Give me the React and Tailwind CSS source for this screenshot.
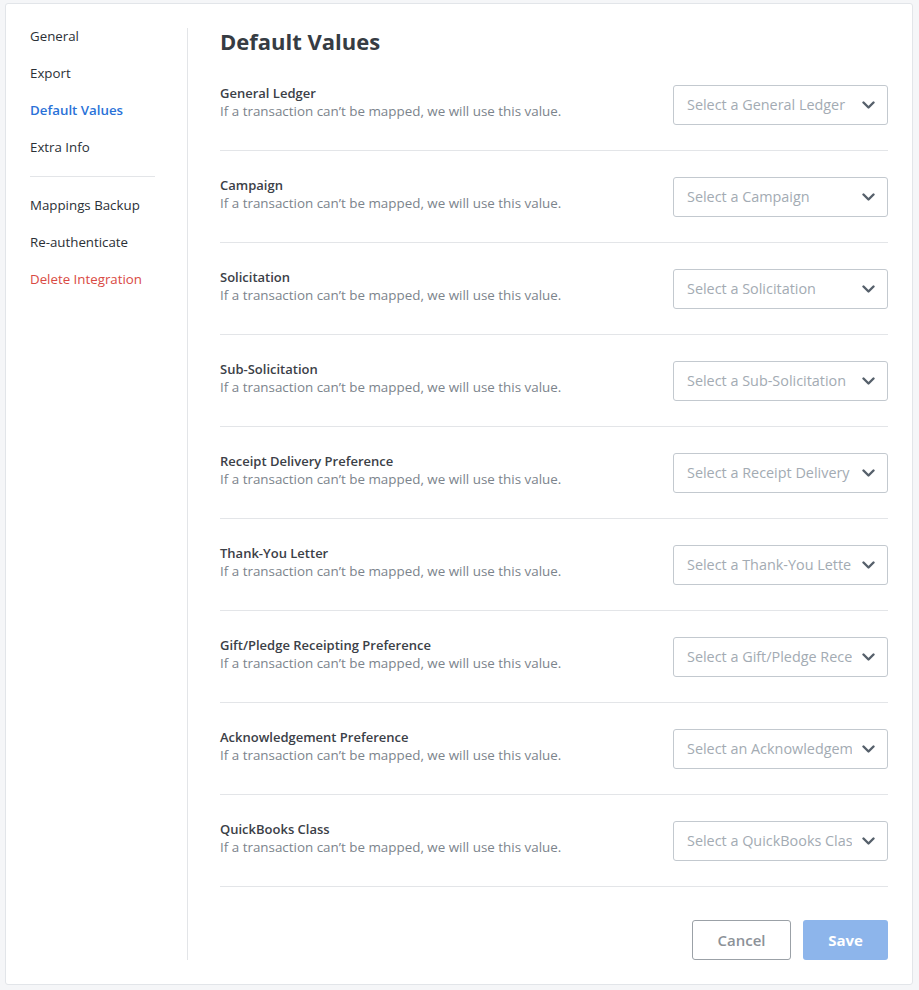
import React from "react";

const rows = [
  { label: "General Ledger", placeholder: "Select a General Ledger" },
  { label: "Campaign", placeholder: "Select a Campaign" },
  { label: "Solicitation", placeholder: "Select a Solicitation" },
  { label: "Sub-Solicitation", placeholder: "Select a Sub-Solicitation" },
  { label: "Receipt Delivery Preference", placeholder: "Select a Receipt Delivery Preference" },
  { label: "Thank-You Letter", placeholder: "Select a Thank-You Letter" },
  { label: "Gift/Pledge Receipting Preference", placeholder: "Select a Gift/Pledge Receipting Preference" },
  { label: "Acknowledgement Preference", placeholder: "Select an Acknowledgement Preference" },
  { label: "QuickBooks Class", placeholder: "Select a QuickBooks Class" },
];

function Chevron() {
  return (
    <svg width="13" height="9" viewBox="0 0 13 9" className="shrink-0">
      <path d="M1.5 1.5 L6.5 6.5 L11.5 1.5" fill="none" stroke="#56606b" strokeWidth="2.4" strokeLinecap="round" strokeLinejoin="round" />
    </svg>
  );
}

function NavItem({ children, className = "" }) {
  return <div className={`h-[16px] leading-[16px] mb-[21px] text-[13.3px] whitespace-nowrap ${className}`}>{children}</div>;
}

export default function App() {
  return (
    <div className="min-h-[990px] bg-[#f5f6f8] pt-[3px] pl-[5px] font-['Open_Sans',sans-serif]">
      <div className="w-[908px] bg-white border border-[#e2e5e9] rounded-[3px] flex pl-[24px] pr-[24px] pt-[24px] pb-[24px]">
        {/* Sidebar */}
        <div className="w-[158px] shrink-0 border-r border-[#e3e5e8]">
          <div className="w-[125px]">
            <NavItem className="text-[#2b3036]">General</NavItem>
            <NavItem className="text-[#2b3036]">Export</NavItem>
            <NavItem className="text-[#2a72d8] font-semibold">Default Values</NavItem>
            <NavItem className="text-[#2b3036]">Extra Info</NavItem>
            <div className="border-t border-[#e3e5e8] mb-[20px]" />
            <NavItem className="text-[#2b3036]">Mappings Backup</NavItem>
            <NavItem className="text-[#2b3036]">Re-authenticate</NavItem>
            <NavItem className="text-[#d94a43]">Delete Integration</NavItem>
          </div>
        </div>

        {/* Main */}
        <div className="flex-1 pl-[32px]">
          <h1 className="text-[22px] font-bold text-[#363c43] leading-[27px] pb-[4px]">Default Values</h1>
          {rows.map((r) => (
            <div key={r.label} className="flex items-start justify-between pt-[26px] pb-[25px] border-b border-[#e3e5e8]">
              <div className="h-[40px] -mt-[1px]">
                <div className="text-[13px] font-semibold text-[#3b4047] leading-[18px]">{r.label}</div>
                <div className="text-[13.4px] text-[#7c848c] leading-[18px]">
                  If a transaction can’t be mapped, we will use this value.
                </div>
              </div>
              <div className="w-[215px] h-[40px] border border-[#c3c9cf] rounded-[3px] flex items-center pl-[13px] pr-[12px]">
                <div className="flex-1 overflow-hidden whitespace-nowrap text-[14.4px] text-[#a3abb3] mr-[10px]">
                  {r.placeholder}
                </div>
                <Chevron />
              </div>
            </div>
          ))}
          <div className="flex justify-end gap-[12px] mt-[33px]">
            <button className="w-[99px] h-[40px] border border-[#9ba1a7] rounded-[3px] text-[15px] font-semibold text-[#8c9298]">
              Cancel
            </button>
            <button className="w-[85px] h-[40px] bg-[#8db5eb] rounded-[3px] text-[15px] font-bold text-white">
              Save
            </button>
          </div>
        </div>
      </div>
    </div>
  );
}
